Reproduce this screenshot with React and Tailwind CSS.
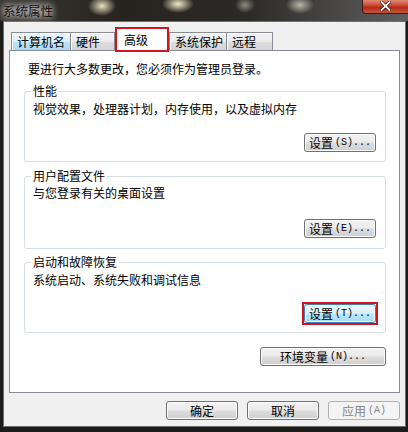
import React from 'react';

const buttonStyles = {
  normal:
    'border-[#707070] bg-[linear-gradient(#f2f2f2,#ebebeb_48%,#dddddd_52%,#cfcfcf)] shadow-[inset_0_0_0_1px_#fcfcfc] text-black',
  focus:
    'border-[#3c7fb1] bg-[linear-gradient(#eaf6fd,#d9f0fc_48%,#bee6fd_52%,#a7d9f5)] shadow-[inset_0_0_0_1px_#fcfcfc] text-black',
  disabled: 'border-[#adb2b5] bg-[#f4f4f4] text-[#838383]',
};

const WinButton = ({ label, hotkey, dots = true, variant = 'normal', className = '' }) => (
  <div
    className={`h-[19px] flex items-center justify-center rounded-[3px] border ${buttonStyles[variant]} ${className}`}
  >
    <span className="text-[12px] leading-[16px]">{label}</span>
    {hotkey && (
      <span className="font-['Liberation_Mono',monospace] text-[10px] leading-[16px] ml-[2px]">
        ({hotkey}){dots ? '...' : ''}
      </span>
    )}
  </div>
);

const GroupBox = ({ title, text, hotkey, highlight, tall }) => (
  <fieldset
    className={`border border-[#d5dfe5] rounded-[3px] pl-[6px] pr-[9px] ${tall ? 'h-[81px]' : 'h-[79px]'}`}
  >
    <legend className="px-[2px] text-[12px] leading-[16px] text-black">{title}</legend>
    <div className={`ml-[2px] text-[12px] leading-[16px] ${tall ? 'mt-[1px]' : 'mt-[2px]'}`}>{text}</div>
    <div className={`flex justify-end ${tall ? 'mt-[18px]' : 'mt-[16px]'}`}>
      {highlight ? (
        <div className="-m-[2px] border-2 border-[#d4141c]">
          <WinButton label="设置" hotkey={hotkey} variant="focus" className="w-[72px]" />
        </div>
      ) : (
        <WinButton label="设置" hotkey={hotkey} className="w-[72px]" />
      )}
    </div>
  </fieldset>
);

const tabBase =
  'h-[18px] flex items-center pl-[5px] border border-b-0 border-[#898c95] text-[12px] leading-[16px] shadow-[inset_1px_1px_0_#ffffff]';
const tabGray = 'bg-[linear-gradient(#f3f3f3,#ebebeb_50%,#dedede_50%,#d4d4d4)]';
const tabBlue = 'bg-[linear-gradient(#eaf6fd,#d9f0fc_50%,#bee6fd_50%,#a7d9f5)]';

export default function App() {
  return (
    <div className="w-[408px] h-[432px] overflow-hidden bg-[#1c1c1c] font-['Noto_Sans_CJK_SC',sans-serif] text-black select-none">
      {/* Title bar (Aero glass over a blurred wallpaper) */}
      <div className="h-[21px] flex justify-between bg-[radial-gradient(ellipse_14px_10px_at_102px_6px,#e9e2bd,transparent),radial-gradient(ellipse_16px_9px_at_178px_4px,#f1ebc8,transparent),radial-gradient(ellipse_14px_9px_at_300px_5px,#b9b7aa,transparent),radial-gradient(ellipse_10px_8px_at_245px_5px,#8f8c80,transparent),linear-gradient(90deg,#3b3733,#27241f_30%,#2c2a27_60%,#5f5f5f)]">
        <span className="pl-[3px] pt-[2px] text-[12.5px] leading-[17px] text-[#111] [text-shadow:0_0_6px_#ffffff,0_0_10px_#ffffff]">
          系统属性
        </span>
        <div className="w-[47px] h-[14px] mr-[-1px] rounded-bl-[4px] border border-t-0 border-[#4a1510] bg-[linear-gradient(#e08a78,#c8442e_45%,#b32a16_55%,#c8543c)] flex items-center justify-center">
          <svg width="11" height="10" viewBox="0 0 11 10" className="mt-[-2px]">
            <path d="M1.5 1 L9.5 9 M9.5 1 L1.5 9" stroke="#3a0a05" strokeWidth="3.2" strokeLinecap="square" />
            <path d="M1.5 1 L9.5 9 M9.5 1 L1.5 9" stroke="#ffffff" strokeWidth="1.8" strokeLinecap="square" />
          </svg>
        </div>
      </div>

      {/* Client area */}
      <div className="ml-[3px] mr-[2px] h-[406px] border border-[#6e6e6e] bg-[#f0f0f0] flex flex-col">
        {/* Tabs */}
        <div className="relative z-10 mt-[5px] h-[25px] pl-[7px] flex items-start">
          <div className={`${tabBase} ${tabBlue} w-[60px] mt-[5px]`}>计算机名</div>
          <div className={`${tabBase} ${tabGray} w-[45px] mt-[5px] -ml-[1px]`}>硬件</div>
          <div className="w-[54px] h-[25px] border-2 border-[#d4141c] bg-white flex items-center pl-[7px] text-[12px] leading-[16px]">
            高级
          </div>
          <div className={`${tabBase} ${tabGray} w-[58px] mt-[5px] pl-[3px]`}>系统保护</div>
          <div className={`${tabBase} ${tabGray} w-[47px] mt-[5px] -ml-[1px]`}>远程</div>
        </div>

        {/* Tab page */}
        <div className="ml-[5px] w-[391px] h-[343px] -mt-[2px] border border-[#898c95] bg-white pt-[10px] pl-[14px] pr-[13px] flex flex-col">
          <div className="ml-[4px] text-[12px] leading-[16px]">要进行大多数更改，您必须作为管理员登录。</div>
          <div className="mt-[6px] flex flex-col">
            <GroupBox title="性能" text="视觉效果，处理器计划，内存使用，以及虚拟内存" hotkey="S" />
          </div>
          <div className="mt-[6px] flex flex-col">
            <GroupBox title="用户配置文件" text="与您登录有关的桌面设置" hotkey="E" tall />
          </div>
          <div className="mt-[5px] flex flex-col">
            <GroupBox title="启动和故障恢复" text="系统启动、系统失败和调试信息" hotkey="T" highlight />
          </div>
          <div className="mt-[14px] flex justify-end">
            <WinButton label="环境变量" hotkey="N" className="w-[126px]" />
          </div>
        </div>

        {/* Dialog buttons */}
        <div className="mt-[8px] pr-[5px] flex justify-end gap-[9px]">
          <WinButton label="确定" className="w-[72px]" />
          <WinButton label="取消" className="w-[72px]" />
          <WinButton label="应用" hotkey="A" dots={false} variant="disabled" className="w-[72px]" />
        </div>
      </div>
    </div>
  );
}
